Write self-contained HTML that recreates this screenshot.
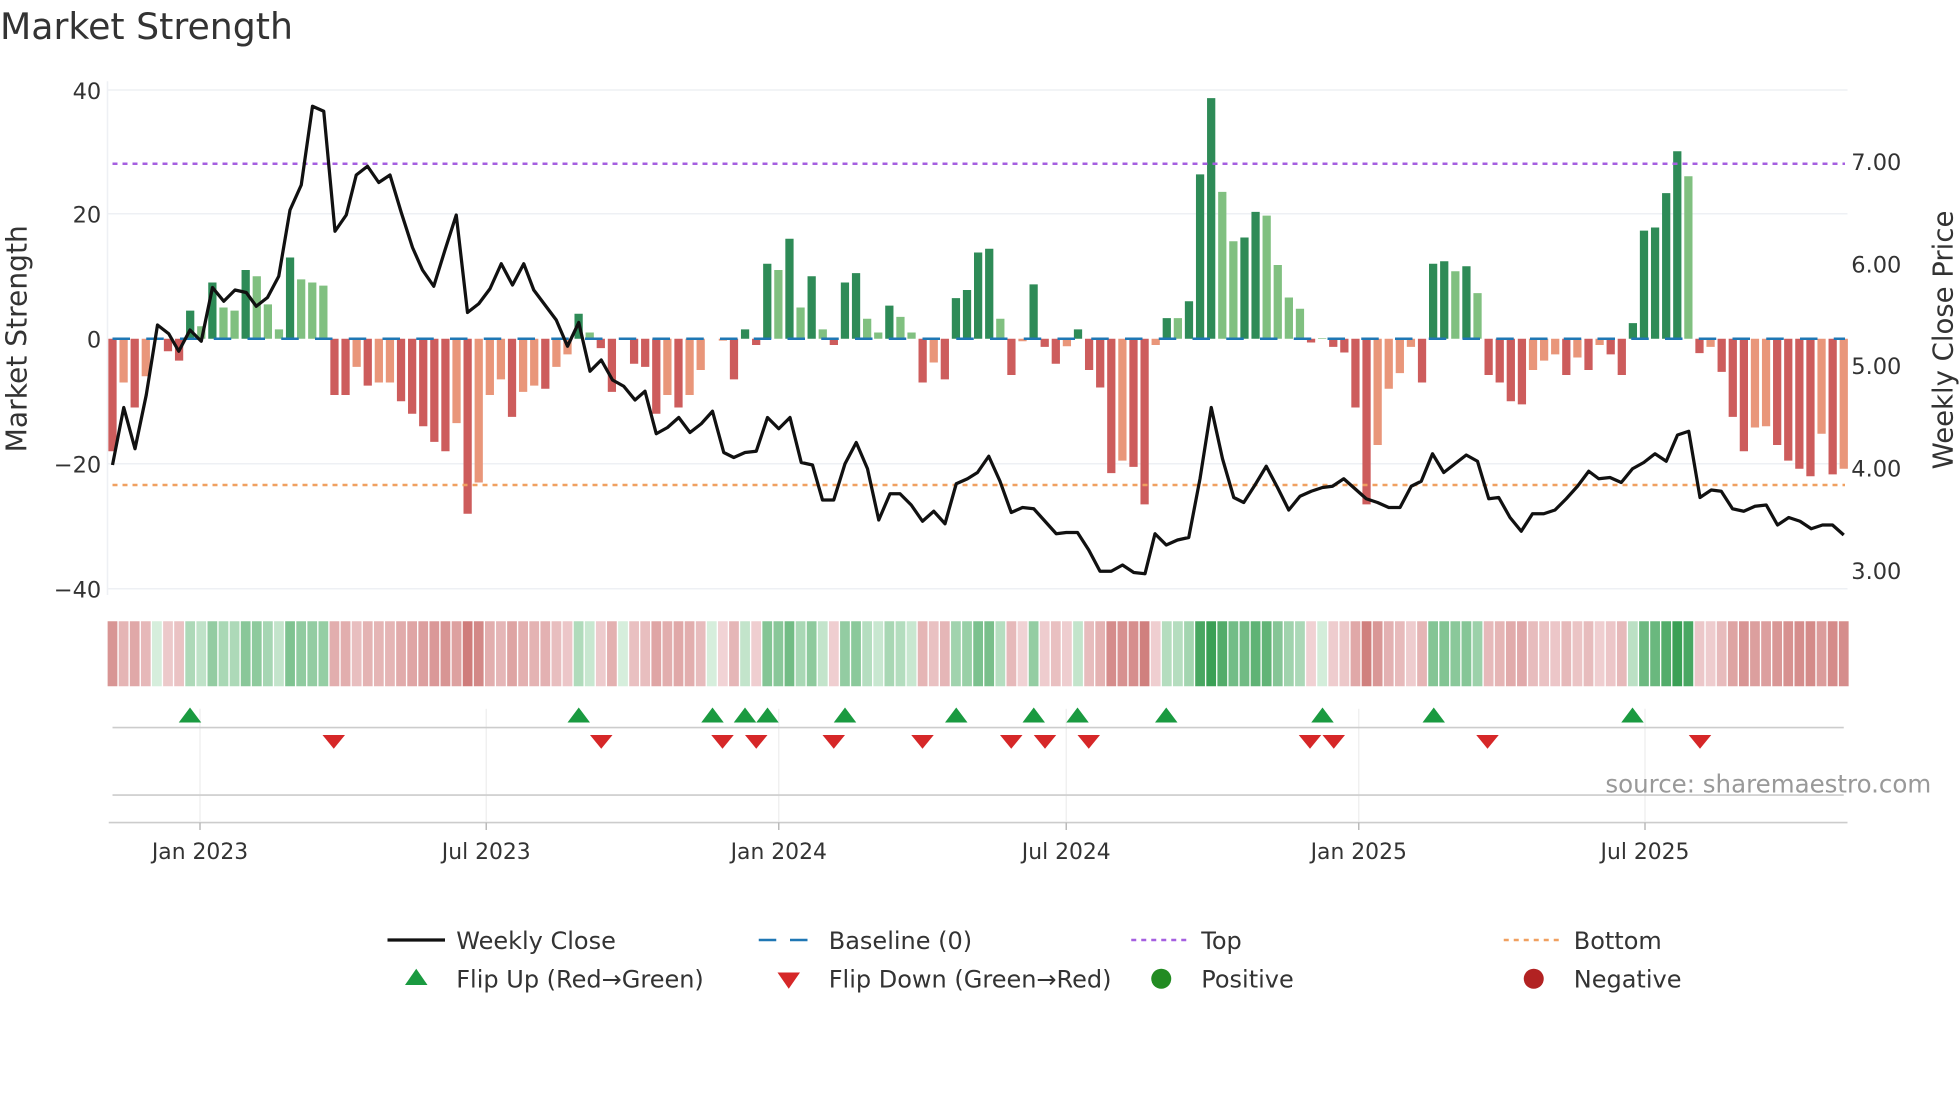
<!DOCTYPE html>
<html><head><meta charset="utf-8"><style>
html,body{margin:0;padding:0;background:#fff;}
svg{display:block;font-family:"DejaVu Sans","Liberation Sans",sans-serif;}
</style></head><body>
<svg id="s" width="1960" height="1102" viewBox="0 0 1568 881.6" xmlns="http://www.w3.org/2000/svg">
<rect width="1568" height="882" fill="#fff"/>
<text x="0" y="31" font-size="29" fill="#333">Market Strength</text>
<g stroke="#eef0f4" stroke-width="1.2">
<line x1="86" y1="72" x2="1478" y2="72"/><line x1="86" y1="171" x2="1478" y2="171"/>
<line x1="86" y1="371" x2="1478" y2="371"/><line x1="86" y1="471" x2="1478" y2="471"/>
<line x1="86" y1="65" x2="86" y2="476"/>
</g>
<g font-size="18" fill="#333" text-anchor="end">
<text x="81" y="79">40</text><text x="81" y="178">20</text><text x="81" y="278">0</text>
<text x="81" y="378">−20</text><text x="81" y="478">−40</text>
</g>
<g font-size="18" fill="#333">
<text x="1481" y="136">7.00</text><text x="1481" y="218">6.00</text><text x="1481" y="299">5.00</text>
<text x="1481" y="381">4.00</text><text x="1481" y="463">3.00</text>
</g>
<text transform="translate(21,271) rotate(-90)" text-anchor="middle" font-size="22.5" fill="#333">Market Strength</text>
<text transform="translate(1562,272) rotate(-90)" text-anchor="middle" font-size="22" fill="#333">Weekly Close Price</text>
<g id="bars"></g>
<line x1="90" y1="271" x2="1476" y2="271" stroke="#1f77b4" stroke-width="2" stroke-dasharray="14,13"/>
<line x1="90" y1="131" x2="1476" y2="131" stroke="#a55fe0" stroke-width="2" stroke-dasharray="4,4"/>
<line x1="90" y1="388" x2="1476" y2="388" stroke="#f0a060" stroke-width="2" stroke-dasharray="4,4"/>
<polyline id="price" fill="none" stroke="#111" stroke-width="2.6" stroke-linejoin="round"/>
<g id="strip"></g>
<g stroke="#eee" stroke-width="1">
<line x1="160" y1="567" x2="160" y2="657"/><line x1="389" y1="567" x2="389" y2="657"/>
<line x1="623" y1="567" x2="623" y2="657"/><line x1="853" y1="567" x2="853" y2="657"/>
<line x1="1087" y1="567" x2="1087" y2="657"/><line x1="1316" y1="567" x2="1316" y2="657"/>
</g>
<line x1="90" y1="582" x2="1475" y2="582" stroke="#ccc" stroke-width="1.3"/>
<line x1="90" y1="636" x2="1475" y2="636" stroke="#ccc" stroke-width="1.3"/>
<line x1="87" y1="658" x2="1478" y2="658" stroke="#ccc" stroke-width="1.3"/>
<g id="marks"></g>
<g stroke="#bbb" stroke-width="1.2">
<line x1="160" y1="658" x2="160" y2="664"/><line x1="389" y1="658" x2="389" y2="664"/>
<line x1="623" y1="658" x2="623" y2="664"/><line x1="853" y1="658" x2="853" y2="664"/>
<line x1="1087" y1="658" x2="1087" y2="664"/><line x1="1316" y1="658" x2="1316" y2="664"/>
</g>
<g font-size="17.5" fill="#333" text-anchor="middle">
<text x="160" y="687">Jan 2023</text><text x="389" y="687">Jul 2023</text><text x="623" y="687">Jan 2024</text>
<text x="853" y="687">Jul 2024</text><text x="1087" y="687">Jan 2025</text><text x="1316" y="687">Jul 2025</text>
</g>
<text x="1545" y="634" font-size="19.6" fill="#999" text-anchor="end">source: sharemaestro.com</text>
<g font-size="19.2" fill="#333">
<line x1="310" y1="752" x2="356" y2="752" stroke="#111" stroke-width="2.6"/><text x="365" y="759">Weekly Close</text>
<line x1="607" y1="752" x2="651" y2="752" stroke="#1f77b4" stroke-width="2" stroke-dasharray="14,11"/><text x="663" y="759">Baseline (0)</text>
<line x1="905" y1="752" x2="949" y2="752" stroke="#a55fe0" stroke-width="2" stroke-dasharray="4,4"/><text x="961" y="759">Top</text>
<line x1="1203" y1="752" x2="1247" y2="752" stroke="#f0a060" stroke-width="2" stroke-dasharray="4,4"/><text x="1259" y="759">Bottom</text>
<polygon points="324,788 342,788 333,775" fill="#1a9a40"/><text x="365" y="790">Flip Up (Red→Green)</text>
<polygon points="622,778 640,778 631,791" fill="#d62728"/><text x="663" y="790">Flip Down (Green→Red)</text>
<circle cx="929" cy="783" r="8" fill="#228b22"/><text x="961" y="790">Positive</text>
<circle cx="1227" cy="783" r="8" fill="#b22222"/><text x="1259" y="790">Negative</text>
</g>
</svg>
<script>
var V=[[-18,1],[-7,0],[-11,1],[-6,0],[0,0],[-2,1],[-3.5,1],[4.5,1],[2,0],[9,1],[5,0],[4.5,0],[11,1],[10,0],[5.5,0],[1.5,0],[13,1],[9.5,0],[9,0],[8.5,0],
[-9,1],[-9,1],[-4.5,0],[-7.5,1],[-7,0],[-7,0],[-10,1],[-12,1],[-14,1],[-16.5,1],[-18,1],[-13.5,0],[-28,1],[-23,0],[-9,0],[-6.5,0],[-12.5,1],[-8.5,0],[-7.5,0],[-8,1],
[-4.5,0],[-2.5,0],[4,1],[1,0],[-1.5,1],[-8.5,1],[0,0],[-4,1],[-4.5,1],[-12,1],[-9,0],[-11,1],[-9,0],[-5,0],[0,0],[-0.3,0],[-6.5,1],[1.5,1],[-1,1],[12,1],
[11,0],[16,1],[5,0],[10,1],[1.5,0],[-1,1],[9,1],[10.5,1],[3.2,0],[1,0],[5.3,1],[3.5,0],[1,0],[-7,1],[-3.8,0],[-6.5,1],[6.5,1],[7.8,1],[13.8,1],[14.4,1],
[3.2,0],[-5.8,1],[-0.4,0],[8.7,1],[-1.3,1],[-4,1],[-1.2,0],[1.5,1],[-5,1],[-7.8,1],[-21.5,1],[-19.5,0],[-20.5,1],[-26.5,1],[-1,0],[3.3,1],[3.3,0],[6,1],[26.3,1],[38.5,1],
[23.5,0],[15.6,0],[16.2,1],[20.3,1],[19.7,0],[11.8,0],[6.6,0],[4.8,0],[-0.6,1],[0.1,0],[-1.3,1],[-2.2,1],[-11,1],[-26.5,1],[-17,0],[-8,0],[-5.5,0],[-1.3,0],[-7,1],[12,1],
[12.4,1],[10.8,0],[11.6,1],[7.3,0],[-5.8,1],[-7,1],[-10,1],[-10.5,1],[-5,0],[-3.5,0],[-2.5,0],[-5.8,1],[-3,0],[-5,1],[-1,0],[-2.5,1],[-5.8,1],[2.5,1],[17.3,1],[17.8,1],
[23.3,1],[30,1],[26,0],[-2.3,1],[-1.3,0],[-5.3,1],[-12.5,1],[-18,1],[-14.2,0],[-14,0],[-17,1],[-19.5,1],[-20.8,1],[-22,1],[-15.2,0],[-21.7,1],[-20.8,0]];
var P="90,372 99,326 108,359 117,316 126,260 135,267 143,281 152,264 161,273 170,230 179,241 188,232 197,234 205,245 214,238 223,221 232,168 241,148 250,85 259,89 268,185 277,172 285,140 294,133 303,146 312,140 321,170 330,198 338,216 347,229 356,200 365,172 374,250 383,243 392,231 401,211 410,228 419,211 427,232 436,244 445,256 454,277 463,258 472,297 481,288 490,304 499,309 508,320 516,313 525,347 534,342 543,334 552,346 561,339 570,329 579,362 587,366 596,362 605,361 614,334 623,343 632,334 641,370 650,372 658,400 667,400 676,371 685,354 694,375 703,416 712,395 720,395 729,404 738,417 747,409 756,419 765,387 774,383 782,378 791,365 800,385 809,410 818,406 827,407 836,417 845,427 853,426 862,426 871,440 880,457 889,457 898,452 907,458 916,459 924,427 933,436 942,432 951,430 960,383 969,326 978,367 987,398 995,402 1004,388 1013,373 1022,390 1031,408 1040,397 1049,393 1058,390 1066,389 1075,383 1084,391 1093,399 1102,402 1111,406 1120,406 1129,389 1137,385 1146,363 1155,378 1164,371 1173,364 1182,369 1191,399 1199,398 1208,414 1217,425 1226,411 1235,411 1244,408 1253,399 1262,389 1271,377 1279,383 1288,382 1297,386 1306,375 1315,370 1324,363 1333,369 1342,348 1351,345 1360,398 1369,392 1377,393 1386,407 1395,409 1404,405 1413,404 1422,420 1431,414 1440,417 1449,423 1458,420 1466,420 1475,428";
var NS="http://www.w3.org/2000/svg";
function el(t,a,p){var e=document.createElementNS(NS,t);for(var k in a)e.setAttribute(k,a[k]);p.appendChild(e);return e;}
document.getElementById('price').setAttribute('points',P);
var bars=document.getElementById('bars'),strip=document.getElementById('strip'),marks=document.getElementById('marks');
var n=V.length,dx=(1475-90)/(n-1);
function mix(a,b,t){var r='#';for(var i=0;i<3;i++){var c=Math.round(a[i]+(b[i]-a[i])*t);r+=('0'+c.toString(16)).slice(-2);}return r;}
for(var i=0;i<n;i++){
 var v=V[i][0],d=V[i][1],x=90+i*dx,w=6.6;
 if(Math.abs(v)>0.05){
  var col=v>0?(d?'#2e8b57':'#80c080'):(d?'#cd5c5c':'#e9967a');
  var y0=271,y1=271-v*5;
  el('rect',{x:x-w/2,y:Math.min(y0,y1),width:w,height:Math.abs(y1-y0),fill:col},bars);
 }
 var t=Math.min(1,Math.abs(v)/30);
 var sc=v>=0?mix([214,238,220],[58,160,85],Math.pow(t,0.7)):mix([242,215,217],[205,120,118],Math.pow(t,0.7));
 el('rect',{x:x-3.9,y:497,width:7.8,height:52,fill:sc},strip);
}
var up=[152,463,570,596,614,676,765,827,862,933,1058,1147,1306];
var dn=[267,481,578,605,667,738,809,836,871,1048,1067,1190,1360];
up.forEach(function(x){el('polygon',{points:(x-9)+',578 '+(x+9)+',578 '+x+',566',fill:'#1a9a40'},marks);});
dn.forEach(function(x){el('polygon',{points:(x-9)+',588 '+(x+9)+',588 '+x+',599',fill:'#d62728'},marks);});
</script>
</body></html>
